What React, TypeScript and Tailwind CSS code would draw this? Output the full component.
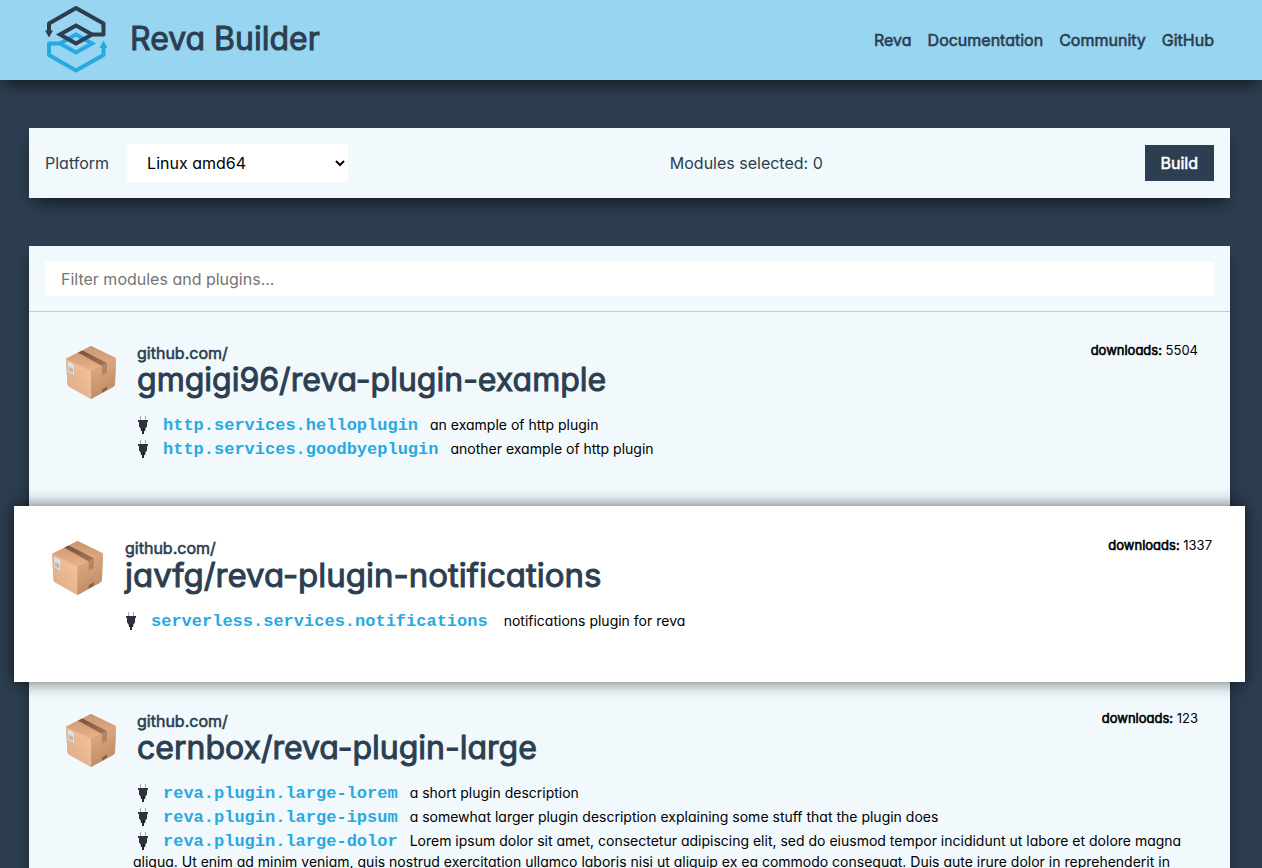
import { useState } from "react";
import { clsx } from "clsx";

type Plugin = { id: string; description: string };
type Module = { owner: string; downloads: number; plugins: Plugin[]; active?: boolean };

const modules: Module[] = [
  {
    owner: "gmgigi96/reva-plugin-example",
    downloads: 5504,
    plugins: [
      { id: "http.services.helloplugin", description: "an example of http plugin" },
      { id: "http.services.goodbyeplugin", description: "another example of http plugin" },
    ],
  },
  {
    owner: "javfg/reva-plugin-notifications",
    downloads: 1337,
    active: true,
    plugins: [{ id: "serverless.services.notifications", description: "notifications plugin for reva" }],
  },
  {
    owner: "cernbox/reva-plugin-large",
    downloads: 123,
    plugins: [
      { id: "reva.plugin.large-lorem", description: "a short plugin description" },
      {
        id: "reva.plugin.large-ipsum",
        description: "a somewhat larger plugin description explaining some stuff that the plugin does",
      },
      {
        id: "reva.plugin.large-dolor",
        description:
          "Lorem ipsum dolor sit amet, consectetur adipiscing elit, sed do eiusmod tempor incididunt ut labore et dolore magna aliqua. Ut enim ad minim veniam, quis nostrud exercitation ullamco laboris nisi ut aliquip ex ea commodo consequat. Duis aute irure dolor in reprehenderit in",
      },
    ],
  },
];

const links = ["Reva", "Documentation", "Community", "GitHub"];

function Logo() {
  return (
    <svg viewBox="44 4 64 70" className="h-[70px] w-16 shrink-0" fill="none" strokeWidth="4" aria-hidden="true">
      <g stroke="#27a9e1" strokeLinejoin="round">
        <path d="M62 42.500H49V54L76 69.500L103.500 54V45" />
        <path d="M60 42.500L76 33.500L92 42.500L76 51.500Z" strokeLinejoin="miter" />
      </g>
      <path d="M103.500 39.500L107.500 47H99.500Z" fill="#27a9e1" />
      <g stroke="#2c3e50" strokeLinejoin="round">
        <path d="M49 31V22.500L76 7L103.500 22.500V33.500H91" />
        <path d="M60 33.500L76 24.500L92 33.500L76 42.500Z" strokeLinejoin="miter" />
      </g>
      <path d="M49 36.500L45 29.500H53Z" fill="#2c3e50" />
    </svg>
  );
}

function PackageIcon({ className }: { className: string }) {
  return (
    <svg viewBox="0 0 50 53" className={className} aria-hidden="true">
      <defs>
        <linearGradient id="box-top" x1="0" y1="0" x2="0" y2="1">
          <stop offset="0" stopColor="#c9966f" />
          <stop offset="1" stopColor="#e8b28a" />
        </linearGradient>
        <linearGradient id="box-left" x1="1" y1="0" x2="0" y2="1">
          <stop offset="0" stopColor="#f6c69e" />
          <stop offset="1" stopColor="#dca981" />
        </linearGradient>
        <linearGradient id="box-right" x1="0.3" y1="0" x2="0.6" y2="1">
          <stop offset="0" stopColor="#dfac84" />
          <stop offset="1" stopColor="#bb8964" />
        </linearGradient>
        <linearGradient id="box-tape" x1="0" y1="0" x2="1" y2="1">
          <stop offset="0" stopColor="#76503c" />
          <stop offset="1" stopColor="#a87656" />
        </linearGradient>
      </defs>
      <path d="M25 0L50 12L49 38Q49 39.500 47 41L25 53L3 40.500Q1.500 39.500 1.500 38L0 12.500Z" fill="#dba67d" />
      <path d="M25 0L49.500 12L25 25L0 13Z" fill="url(#box-top)" />
      <path d="M0 13L25 25V53L3 40.500Q1.500 39.500 1.500 38Z" fill="url(#box-left)" />
      <path d="M25 25L50 12L49 38Q49 39.500 47 41L25 53Z" fill="url(#box-right)" />
      <path d="M12 6.500L16.500 4.500L41 17L36 20Z" fill="url(#box-tape)" />
      <path d="M36 20L41 17V26.500L36 29.500Z" fill="#b58463" />
      <path d="M36 43.500L41 40.500V43.500L36 47Z" fill="#8a6047" />
      <path d="M2 15.500L8 18.500V29L2.500 26Z" fill="#dfe0df" />
      <path d="M3 20.500L7 22.500V27L3 25Z" fill="#b4babd" />
    </svg>
  );
}

function PlugIcon() {
  return (
    <svg
      viewBox="0 0 10 18"
      className="-mt-1 mr-[15px] ml-[5px] inline-block h-[18px] w-2.5 align-[-4px]"
      aria-hidden="true"
    >
      <path d="M2.500 0V5M7.500 0V5" stroke="#a8adb5" strokeWidth="1" />
      <path d="M0 4H10V6H9V10L8 12H2L1 10V6H0Z" fill="#30303e" />
      <path d="M2.500 12H7.500L7 15H6V18H4V15H3Z" fill="#252532" />
    </svg>
  );
}

function ModuleCard({ module }: { module: Module }) {
  const { owner, downloads, plugins, active } = module;
  return (
    <li
      className={clsx(
        "flex items-start",
        active
          ? "relative z-10 -mx-[15px] -my-0.5 bg-white pt-[33px] pr-[33px] pb-[50px] pl-[38px] shadow-[0_0_16px_rgba(0,0,0,0.6)]"
          : "pt-8 pr-8 pb-12 pl-[37px]",
      )}
    >
      <PackageIcon className={clsx("mt-0.5 shrink-0", active ? "h-[54px] w-[51px]" : "h-[53px] w-[50px]")} />
      <div className={clsx("min-w-0 flex-1", active ? "pl-[18px]" : "pl-[17px]")}>
        <div className="flex items-start justify-between pl-1">
          <h2 className="text-[#2c3e50]">
            <span className="block text-base leading-[18px] [-webkit-text-stroke:0.6px]">github.com/</span>
            <span
              className={clsx(
                "block leading-9 [-webkit-text-stroke:1px]",
                active ? "text-[33px]" : "text-[32px]",
              )}
            >
              {owner}
            </span>
          </h2>
          <p className="text-[13px] leading-[13px]">
            <span className="[-webkit-text-stroke:0.6px]">downloads:</span> {downloads}
          </p>
        </div>
        <ul className={clsx("flex flex-col gap-[3px] text-sm leading-5", active ? "mt-[18px]" : "mt-[17px]")}>
          {plugins.map((p) => (
            <li key={p.id}>
              <PlugIcon />
              <code
                className={clsx(
                  "font-['Liberation_Mono',monospace] text-[17px] leading-5 font-bold text-[#27a9e1]",
                  active ? "mr-4" : "mr-3",
                )}
              >
                {p.id}
              </code>
              {p.description}
            </li>
          ))}
        </ul>
      </div>
    </li>
  );
}

export default function App() {
  const [query, setQuery] = useState("");
  const visible = modules.filter((m) => m.owner.includes(query));

  return (
    <div className="min-h-screen bg-[#2c3e50] font-['Inter','Liberation_Sans',sans-serif] text-black [font-feature-settings:'cv11']">
      <header className="flex h-20 items-center justify-between bg-[#98d5f1] pr-12 pl-11 text-[#2c3e50] shadow-[0_8px_16px_-4px_rgba(0,0,0,0.6)]">
        <div className="flex items-center gap-[22px]">
          <Logo />
          <h1 className="pb-0.5 text-[32px] leading-10 [-webkit-text-stroke:1px]">Reva Builder</h1>
        </div>
        <nav className="flex gap-4 text-base leading-6 [-webkit-text-stroke:0.6px]">
          {links.map((l) => (
            <a key={l} href="#">
              {l}
            </a>
          ))}
        </nav>
      </header>

      <main className="flex flex-col gap-12 pt-12 pr-8 pl-[29px]">
        <section className="flex items-center justify-between bg-[#f1f9fd] p-4 text-base text-[#2c3e50] shadow-[0_8px_16px_-4px_rgba(0,0,0,0.6)]">
          <div className="flex items-center gap-[18px]">
            <label htmlFor="platform">Platform</label>
            <select id="platform" className="h-[38px] w-[221px] bg-white px-4 text-black">
              <option>Linux amd64</option>
            </select>
          </div>
          <p>Modules selected: 0</p>
          <button type="button" className="h-9 bg-[#2c3e50] px-4 text-white [-webkit-text-stroke:0.6px]">
            Build
          </button>
        </section>

        <section className="bg-[#f1f9fd] shadow-[0_8px_16px_-4px_rgba(0,0,0,0.6)]">
          <div className="border-b border-[#c3cdd3] px-4 pt-4 pb-[15px]">
            <input
              type="text"
              aria-label="Filter modules and plugins"
              placeholder="Filter modules and plugins..."
              value={query}
              onChange={(e) => setQuery(e.target.value)}
              className="block h-[34px] w-full bg-white px-4 text-base placeholder:text-[#757575]"
            />
          </div>
          <ul>
            {visible.map((m) => (
              <ModuleCard key={m.owner} module={m} />
            ))}
          </ul>
        </section>
      </main>
    </div>
  );
}
